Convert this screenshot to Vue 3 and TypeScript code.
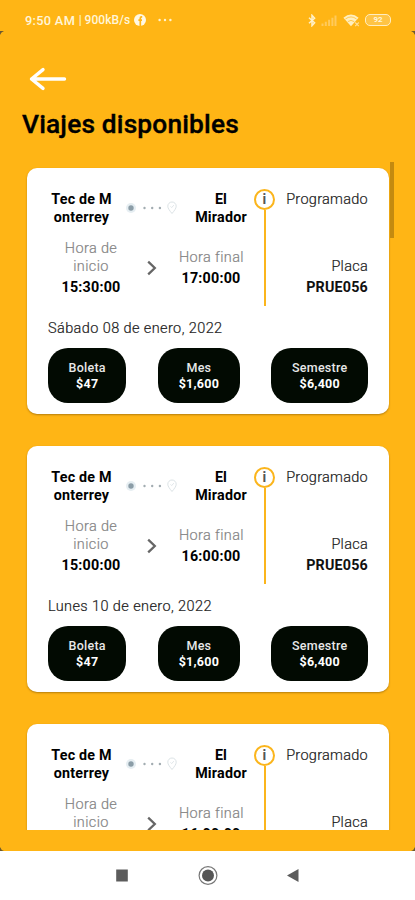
<script setup lang="ts">
interface Fare {
  label: string
  price: string
}

interface Trip {
  id: number
  origin: string[]
  destination: string[]
  startsAt: string
  endsAt: string
  status: string
  plate: string
  date?: string
}

const fares: Fare[] = [
  { label: 'Boleta', price: '$47' },
  { label: 'Mes', price: '$1,600' },
  { label: 'Semestre', price: '$6,400' },
]

const base = {
  origin: ['Tec de M', 'onterrey'],
  destination: ['El', 'Mirador'],
  status: 'Programado',
  plate: 'PRUE056',
}

const trips: Trip[] = [
  { ...base, id: 1, startsAt: '15:30:00', endsAt: '17:00:00', date: 'Sábado 08 de enero, 2022' },
  { ...base, id: 2, startsAt: '15:00:00', endsAt: '16:00:00', date: 'Lunes 10 de enero, 2022' },
  { ...base, id: 3, startsAt: '', endsAt: '16:00:00', plate: '' },
]
</script>

<template>
  <div class="phone">
    <div class="screen">
      <header class="status-bar">
        <div class="status-left">
          <span class="clock">9:50 AM</span>
          <span class="divider">|</span>
          <span class="speed">900kB/s</span>
          <svg class="fb" viewBox="0 0 12 12">
            <circle cx="6" cy="6" r="6" fill="#fff8e4" />
            <path d="M8.2 2.9H7.5Q6.3 2.9 6.3 4.2V12M4.4 6.2H8" fill="none" stroke="#ffb515" stroke-width="1.7" />
          </svg>
          <svg class="more" viewBox="0 0 14 4" fill="#fff3d0">
            <circle cx="1.6" cy="2" r="1.2" />
            <circle cx="7" cy="2" r="1.2" />
            <circle cx="12.4" cy="2" r="1.2" />
          </svg>
        </div>
        <div class="status-right">
          <svg class="bt" viewBox="0 0 8 13">
            <path d="M1 3.8L6.6 8.8L4 11.7V1.3L6.6 4.2L1 9.2" fill="none" stroke="#fff1c9" stroke-width="1.5" />
          </svg>
          <svg class="signal" viewBox="0 0 16 11" fill="#ffca5c">
            <path d="M0.5 8.5h2V11h-2zM3.8 6.8h2V11h-2zM7.1 4.8h2V11h-2zM10.4 2.8h2V11h-2zM13.5 0.5h2V11h-2z" />
          </svg>
          <svg class="wifi" viewBox="0 0 17 13">
            <path d="M0.4 3.8Q8 -2.8 15.6 3.8L8 12.2Z" fill="#ffefbf" />
            <path d="M2.4 5Q8 0.8 13.6 5M4.8 7.6Q8 5.2 11.2 7.6" fill="none" stroke="#ffbf35" stroke-width="0.8" />
            <path d="M12.2 8.5l3.6 3.6M15.8 8.5l-3.6 3.6" stroke="#ffe09a" stroke-width="1.1" />
          </svg>
          <span class="battery">92</span>
        </div>
      </header>

      <div class="top">
        <svg class="back" viewBox="0 0 38 24">
          <path d="M35.5 12H2.500M14 2.600L2.500 12L14 21.400" fill="none" stroke="#fff" stroke-width="3.400" stroke-linecap="round" stroke-linejoin="round" />
        </svg>
        <h1>Viajes disponibles</h1>
      </div>

      <main class="list">
        <article v-for="trip in trips" :key="trip.id" class="card">
          <div class="details">
            <div class="journey">
              <div class="places">
                <div class="origin"><div v-for="line in trip.origin" :key="line">{{ line }}</div></div>
                <svg class="route" viewBox="0 0 54 14">
                  <circle cx="6" cy="7" r="5" fill="#e6eef2" />
                  <circle cx="6" cy="7" r="2.7" fill="#8b9da7" />
                  <g fill="#a2acb1">
                    <circle cx="19.5" cy="7" r="1.2" />
                    <circle cx="27.2" cy="7" r="1.2" />
                    <circle cx="34.9" cy="7" r="1.2" />
                  </g>
                  <path d="M47 12.500C44.500 9.500 42.800 7.300 42.800 5.200A4.200 4.200 0 0 1 51.200 5.200C51.200 7.300 49.500 9.500 47 12.500Z" fill="none" stroke="#dce3e6" stroke-width="1" />
                  <path d="M45.500 5.400L46.700 6.600L48.800 4.100" fill="none" stroke="#dce3e6" stroke-width="0.900" />
                </svg>
                <div class="destination"><div v-for="line in trip.destination" :key="line">{{ line }}</div></div>
              </div>
              <div class="times">
                <div class="time start">
                  <div class="caption">Hora de<br />inicio</div>
                  <div class="hour">{{ trip.startsAt }}</div>
                </div>
                <svg class="chevron" viewBox="0 0 12 16">
                  <path d="M2.200 1.700L8.800 8L2.200 14.300" fill="none" stroke="#666" stroke-width="2.300" />
                </svg>
                <div class="time end">
                  <div class="caption">Hora final</div>
                  <div class="hour">{{ trip.endsAt }}</div>
                </div>
              </div>
            </div>
            <div class="timeline">
              <div class="info">i</div>
              <div class="stem"></div>
            </div>
            <div class="meta">
              <div class="state">{{ trip.status }}</div>
              <div class="plate">
                <div>Placa</div>
                <div class="hour">{{ trip.plate }}</div>
              </div>
            </div>
          </div>
          <template v-if="trip.date">
            <div class="date">{{ trip.date }}</div>
            <div class="fares">
              <button v-for="fare in fares" :key="fare.label" type="button" class="fare">
                <span>{{ fare.label }}</span>
                <strong>{{ fare.price }}</strong>
              </button>
            </div>
          </template>
        </article>
        <div class="scrollbar"></div>
      </main>

      <svg class="corner tl" viewBox="0 0 4 4"><path d="M0 0H4Q1 1 0 4Z" fill="#6b5930" /></svg>
      <svg class="corner tr" viewBox="0 0 4 4"><path d="M0 0H4V4Q3 1 0 0Z" fill="#6b5930" /></svg>
      <svg class="corner bl" viewBox="0 0 4 4"><path d="M0 0Q1 3 4 4H0Z" fill="#6b5930" /></svg>
      <svg class="corner br" viewBox="0 0 4 4"><path d="M4 0V4H0Q3 3 4 0Z" fill="#6b5930" /></svg>
    </div>

    <nav class="nav">
      <svg viewBox="0 0 20 20"><rect x="4.200" y="4.500" width="11.600" height="12" fill="#5c5c5c" /></svg>
      <svg viewBox="0 0 20 20">
        <circle cx="10" cy="10.500" r="8.900" fill="none" stroke="#777" stroke-width="1.200" />
        <circle cx="10" cy="10.500" r="6" fill="#555" />
      </svg>
      <svg viewBox="0 0 20 20"><path d="M3 10.500L14.500 4V17Z" fill="#5c5c5c" /></svg>
    </nav>
  </div>
</template>

<style>
body {
  margin: 0;
  overflow: hidden;
}
</style>

<style scoped>
.phone {
  width: 415px;
  height: 900px;
  display: flex;
  flex-direction: column;
  overflow: hidden;
  background: #fff;
  color: #000;
  font-family: Roboto, "Liberation Sans", sans-serif;
}
.screen {
  position: relative;
  box-sizing: border-box;
  height: 850.500px;
  padding-bottom: 21px;
  display: flex;
  flex-direction: column;
  background: #ffb515;
}
.status-bar {
  height: 40px;
  box-sizing: border-box;
  padding: 0 24px 0 25px;
  display: flex;
  justify-content: space-between;
  align-items: center;
  color: #fff5d9;
  font-size: 12px;
  font-weight: 500;
}
.status-left,
.status-right {
  display: flex;
  align-items: center;
}
.clock {
  width: 51px;
  font-size: 12.800px;
  letter-spacing: 0.300px;
  white-space: nowrap;
}
.divider {
  width: 8.500px;
  text-align: center;
}
.speed {
  width: 46px;
  font-size: 12px;
  letter-spacing: 0.100px;
}
.fb {
  width: 12px;
  height: 12px;
  margin-left: 3.500px;
}
.more {
  width: 14px;
  height: 4px;
  margin-left: 11.500px;
}
.bt {
  width: 8px;
  height: 13px;
}
.signal {
  width: 16px;
  height: 11px;
  margin-left: 5px;
}
.wifi {
  width: 17px;
  height: 13px;
  margin-left: 6px;
}
.battery {
  box-sizing: border-box;
  width: 26px;
  height: 12px;
  margin-left: 5px;
  border: 1.500px solid #ffedc0;
  border-radius: 5px;
  background: #ffc445;
  font-size: 8px;
  font-weight: 700;
  line-height: 10px;
  text-align: center;
}
.top {
  height: 115px;
  padding: 27px 0 0 22px;
  box-sizing: border-box;
}
.back {
  display: block;
  width: 38px;
  height: 24px;
  margin-left: 7px;
}
h1 {
  margin: 17px 0 0;
  font-size: 26.300px;
  font-weight: 500;
  letter-spacing: 0.170px;
  line-height: 32px;
  white-space: nowrap;
  -webkit-text-stroke: 0.350px #000;
}
.list {
  position: relative;
  flex: 1;
  min-height: 0;
  padding: 12.500px 26px 0 27px;
  display: flex;
  flex-direction: column;
  gap: 32px;
  overflow: hidden;
}
.scrollbar {
  position: absolute;
  top: 7px;
  right: 21px;
  width: 4px;
  height: 76px;
  background: #c48a10;
}
.card {
  flex: none;
  box-sizing: border-box;
  height: 246px;
  padding: 21px 21px 0;
  border-radius: 10px;
  background: #fff;
  box-shadow: 0 1px 2px rgba(90, 60, 0, 0.450);
  font-size: 14.500px;
  letter-spacing: 0.200px;
  line-height: 18px;
}
.details {
  height: 117.500px;
  display: flex;
}
.journey {
  width: 205.500px;
}
.places {
  display: flex;
  padding-top: 1.400px;
  font-weight: 700;
  font-size: 14.300px;
  text-align: center;
  white-space: nowrap;
}
.origin {
  width: 67px;
}
.route {
  width: 54px;
  height: 14px;
  margin: 11px 12px 0 9.500px;
}
.destination {
  width: 61px;
}
.times {
  height: 57px;
  margin-top: 14px;
  padding-left: 12px;
  display: flex;
  align-items: center;
}
.time {
  width: 64px;
  text-align: center;
  white-space: nowrap;
}
.start {
  width: 62px;
}
.caption {
  color: #858585;
  font-weight: 300;
  letter-spacing: 0.350px;
  -webkit-text-stroke: 0.200px #858585;
}
.hour {
  min-height: 18px;
  margin-top: 2px;
  font-size: 14.300px;
  font-weight: 700;
}
.chevron {
  width: 12px;
  height: 16px;
  margin: 0 21px 1px 24px;
}
.timeline {
  width: 22px;
  display: flex;
  flex-direction: column;
  align-items: center;
}
.info {
  box-sizing: border-box;
  width: 21px;
  height: 21px;
  border: 2px solid #fbb51c;
  border-radius: 50%;
  color: #555;
  font-size: 14px;
  font-weight: 700;
  line-height: 17px;
  text-align: center;
}
.stem {
  width: 2px;
  flex: 1;
  background: #fbb51c;
}
.meta {
  flex: 1;
  padding-top: 2px;
  text-align: right;
  white-space: nowrap;
  color: #222;
}
.state,
.plate > div:first-child,
.date {
  font-weight: 300;
  letter-spacing: 0.280px;
  -webkit-text-stroke: 0.200px #222;
}
.plate {
  margin-top: 49px;
}
.plate .hour {
  color: #111;
}
.date {
  margin-top: 13.500px;
  color: #222;
  letter-spacing: 0.400px;
}
.fares {
  margin-top: 10.500px;
  display: flex;
  justify-content: space-between;
}
.fare {
  height: 55px;
  padding: 1px 20.500px 0;
  border: 0;
  border-radius: 20px;
  display: flex;
  flex-direction: column;
  align-items: center;
  justify-content: center;
  background: #020a02;
  color: #fff;
  font-family: inherit;
  font-size: 12.500px;
  letter-spacing: 0.260px;
  line-height: 16.500px;
}
.fare span {
  font-weight: 500;
  color: #e8e8e8;
}
.corner {
  position: absolute;
  width: 4px;
  height: 4px;
}
.tl {
  top: 31px;
  left: 0;
}
.tr {
  top: 31px;
  right: 0;
}
.bl {
  bottom: 0;
  left: 0;
}
.br {
  bottom: 0;
  right: 0;
}
.nav {
  flex: 1;
  display: flex;
  justify-content: center;
  align-items: center;
  gap: 66px;
}
.nav svg {
  width: 20px;
  height: 20px;
}
</style>
